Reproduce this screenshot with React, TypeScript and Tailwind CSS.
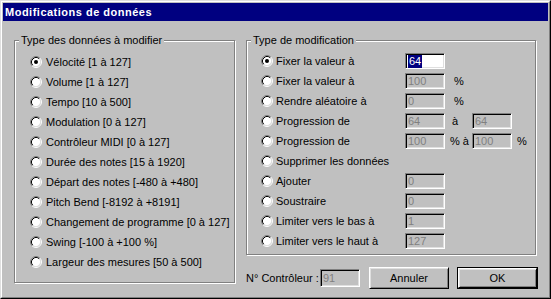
import React from 'react';

const font = { fontFamily: '"Liberation Sans", Arial, sans-serif' };

function Radio({ checked }: { checked?: boolean }) {
  return (
    <svg width="12" height="12" viewBox="0 0 12 12" className="shrink-0">
      <circle cx="6" cy="6" r="4.5" fill="#fff" />
      <path d="M2.11 9.89A5.5 5.5 0 0 1 9.89 2.11" stroke="#808080" fill="none" />
      <path d="M9.89 2.11A5.5 5.5 0 0 1 2.11 9.89" stroke="#fff" fill="none" />
      <path d="M2.82 9.18A4.5 4.5 0 0 1 9.18 2.82" stroke="#000" fill="none" />
      <path d="M9.18 2.82A4.5 4.5 0 0 1 2.82 9.18" stroke="#dfdfdf" fill="none" />
      {checked && <circle cx="6" cy="6" r="2" fill="#000" />}
    </svg>
  );
}

function Field({ value, active, h = 'h-[16px]' }: { value: string; active?: boolean; h?: string }) {
  return (
    <div
      className={`w-[40px] ${h} shrink-0 flex items-center pl-[2px] border border-t-[#808080] border-l-[#808080] border-b-white border-r-white shadow-[inset_1px_1px_0_#000,inset_-1px_-1px_0_#dfdfdf] ${
        active ? 'bg-white text-white' : 'bg-[#c0c0c0] text-[#808080]'
      }`}
    >
      {active ? <span className="bg-[#000080] leading-[13px] px-px">{value}</span> : <span className="leading-[13px]">{value}</span>}
    </div>
  );
}

function Group({ title, className, children }: { title: string; className: string; children: React.ReactNode }) {
  return (
    <div className={`relative border border-[#808080] shadow-[inset_1px_1px_0_#fff,1px_1px_0_#fff] ${className}`}>
      <span className="absolute -top-[8px] left-[4px] bg-[#c0c0c0] px-[2px] leading-[14px]">{title}</span>
      {children}
    </div>
  );
}

const dataTypes = [
  'Vélocité [1 à 127]',
  'Volume [1 à 127]',
  'Tempo [10 à 500]',
  'Modulation [0 à 127]',
  'Contrôleur MIDI [0 à 127]',
  'Durée des notes [15 à 1920]',
  'Départ des notes [-480 à +480]',
  'Pitch Bend [-8192 à +8191]',
  'Changement de programme [0 à 127]',
  'Swing [-100 à +100 %]',
  'Largeur des mesures [50 à 500]',
];

function ModRow({ checked, label, children }: { checked?: boolean; label: string; children?: React.ReactNode }) {
  return (
    <div className="h-[20px] flex items-center">
      <Radio checked={checked} />
      <span className="ml-[3px] w-[129px] shrink-0">{label}</span>
      {children}
    </div>
  );
}

export default function App() {
  return (
    <div
      className="w-[551px] h-[299px] bg-[#c0c0c0] text-black text-[11px] border border-t-[#dfdfdf] border-l-[#dfdfdf] border-r-black border-b-black"
      style={font}
    >
      <div className="h-full border border-t-white border-l-white border-r-[#808080] border-b-[#808080] p-px flex flex-col">
        <div className="h-[18px] bg-[#000080] text-white font-bold text-[11px] tracking-[0.5px] flex items-center pl-[2px]">
          Modifications de données
        </div>

        <div className="flex pl-[11px] pt-[19px]">
          <Group title="Type des données à modifier" className="w-[221px] h-[243px] pt-[11px] pl-[15px]">
            {dataTypes.map((t, i) => (
              <div key={t} className="h-[20px] flex items-center">
                <Radio checked={i === 0} />
                <span className="ml-[4px]">{t}</span>
              </div>
            ))}
          </Group>

          <div className="ml-[11px] flex flex-col">
            <Group title="Type de modification" className="w-[290px] h-[215px] pt-[10px] pl-[14px]">
              <ModRow checked label="Fixer la valeur à">
                <Field value="64" active />
              </ModRow>
              <ModRow label="Fixer la valeur à">
                <Field value="100" />
                <span className="ml-[9px]">%</span>
              </ModRow>
              <ModRow label="Rendre aléatoire à">
                <Field value="0" />
                <span className="ml-[9px]">%</span>
              </ModRow>
              <ModRow label="Progression de">
                <Field value="64" />
                <span className="w-[27px] pl-[7px]">à</span>
                <Field value="64" />
              </ModRow>
              <ModRow label="Progression de">
                <Field value="100" />
                <span className="w-[27px] pl-[5px]">% à</span>
                <Field value="100" />
                <span className="ml-[5px]">%</span>
              </ModRow>
              <ModRow label="Supprimer les données" />
              <ModRow label="Ajouter">
                <Field value="0" />
              </ModRow>
              <ModRow label="Soustraire">
                <Field value="0" />
              </ModRow>
              <ModRow label="Limiter vers le bas à">
                <Field value="1" />
              </ModRow>
              <ModRow label="Limiter vers le haut à">
                <Field value="127" />
              </ModRow>
            </Group>

            <div className="mt-[12px] flex items-center">
              <span className="w-[74px] shrink-0">N° Contrôleur :</span>
              <Field value="91" h="h-[18px]" />
              <button className="ml-[9px] w-[80px] h-[22px] border border-t-white border-l-white border-r-black border-b-black shadow-[inset_1px_1px_0_#dfdfdf,inset_-1px_-1px_0_#808080] bg-[#c0c0c0]">
                Annuler
              </button>
              <div className="ml-[8px] border border-black">
                <button className="w-[79px] h-[20px] border border-t-white border-l-white border-r-black border-b-black shadow-[inset_1px_1px_0_#dfdfdf,inset_-1px_-1px_0_#808080] bg-[#c0c0c0]">
                  OK
                </button>
              </div>
            </div>
          </div>
        </div>
      </div>
    </div>
  );
}
